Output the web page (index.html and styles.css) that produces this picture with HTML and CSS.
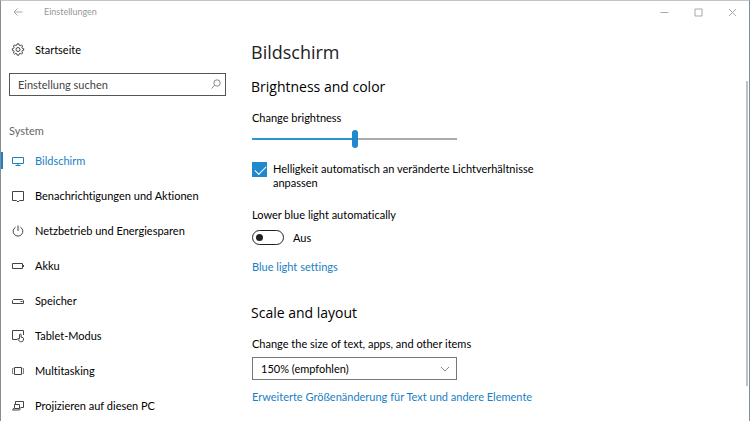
FILE: index.html
```html
<!DOCTYPE html>
<html lang="de">
<head>
    <meta charset="UTF-8">
    <meta name="viewport" content="width=device-width, initial-scale=1.0">
    <title>Einstellungen</title>
    <link rel="stylesheet" href="styles.css">
</head>
<body>
    <div class="window">
        <header class="titlebar">
            <button class="title-btn back" aria-label="Zurück">
                <svg width="10" height="10" viewBox="0 0 10 10"><path d="M9.5 5H1M4.5 1.5L1 5l3.500 3.500"/></svg>
            </button>
            <span class="title-text">Einstellungen</span>
            <div class="title-controls">
                <button class="title-btn" aria-label="Minimieren">
                    <svg width="9" height="9" viewBox="0 0 9 9"><path d="M0.500 4.500h8"/></svg>
                </button>
                <button class="title-btn" aria-label="Maximieren">
                    <svg width="9" height="9" viewBox="0 0 9 9"><path d="M1 1h7v7H1z"/></svg>
                </button>
                <button class="title-btn" aria-label="Schließen">
                    <svg width="9" height="9" viewBox="0 0 9 9"><path d="M1 1l7 7M8 1L1 8"/></svg>
                </button>
            </div>
        </header>

        <div class="layout">
            <aside class="sidebar">
                <a class="nav-item" href="#">
                    <svg class="icon" viewBox="0 0 14 14">
                        <path d="M5.800 2.200L6.200.8h1.600l.4 1.400 1 .4 1.300-.7 1.100 1.100-.7 1.300.4 1 1.400.4v1.600l-1.400.4-.4 1 .7 1.300-1.100 1.100-1.300-.7-1 .4-.4 1.400H6.200l-.4-1.400-1-.4-1.300.7-1.100-1.100.7-1.300-.4-1L1.300 7.300V5.700l1.400-.4.4-1L2.400 3l1.100-1.100 1.300.7z"/>
                        <circle cx="7" cy="6.500" r="2"/>
                    </svg>
                    Startseite
                </a>
                <div class="search">
                    <input type="text" class="search-input" placeholder="Einstellung suchen" aria-label="Einstellung suchen">
                    <svg class="search-icon" viewBox="0 0 10 10"><circle cx="6" cy="4" r="3.200"/><path d="M3.700 6.300L.5 9.500"/></svg>
                </div>
                <h2 class="nav-heading">System</h2>
                <nav class="nav">
                    <a class="nav-item active" href="#">
                        <svg class="icon" viewBox="0 0 14 14"><path d="M1.500 3.500h11v6h-11zM4.500 11.500h5M7 9.500v2"/></svg>
                        Bildschirm
                    </a>
                    <a class="nav-item" href="#">
                        <svg class="icon" viewBox="0 0 14 14"><path d="M1.500 2.500h11v9H8.500L7 13l-1.500-1.500h-4z"/></svg>
                        Benachrichtigungen und Aktionen
                    </a>
                    <a class="nav-item" href="#">
                        <svg class="icon" viewBox="0 0 14 14"><path d="M7 1.500V7M4.500 3.200a4.800 4.800 0 1 0 5 0"/></svg>
                        Netzbetrieb und Energiesparen
                    </a>
                    <a class="nav-item" href="#">
                        <svg class="icon" viewBox="0 0 14 14"><path d="M1.500 4.500h10v5h-10zM12.500 6v2"/></svg>
                        Akku
                    </a>
                    <a class="nav-item" href="#">
                        <svg class="icon" viewBox="0 0 14 14"><path d="M2.500 5.500h9l1 1v3h-11v-3zM9.500 7.500h2"/></svg>
                        Speicher
                    </a>
                    <a class="nav-item" href="#">
                        <svg class="icon" viewBox="0 0 14 14"><path d="M6 10.500H1.500v-9h11v4.500M8.500 9.800V5.800a.8.8 0 0 1 1.600 0v2.400l1.800.4q.8.300.7 1.200l-.3 1.500q-.3 1.400-1.600 1.400H9.500q-.8 0-1.300-.7L6.500 9.700q.7-.8 2 .4"/></svg>
                        Tablet-Modus
                    </a>
                    <a class="nav-item" href="#">
                        <svg class="icon" viewBox="0 0 14 14"><path d="M3.500 3.500h7v7h-7z"/><path stroke-opacity=".7" d="M2.500 4.500h-1v5h1M11.500 4.500h1v5h-1"/></svg>
                        Multitasking
                    </a>
                    <a class="nav-item" href="#">
                        <svg class="icon" viewBox="0 0 14 14"><path d="M4.500 5.500v-3h8v6h-3M3.500 5.500h5v4h-5zM3.500 8.500L1.500 11h7l1-1.500"/></svg>
                        Projizieren auf diesen PC
                    </a>
                </nav>
            </aside>

            <main class="content">
                <h1 class="page-title">Bildschirm</h1>

                <section class="section">
                    <h2 class="section-title">Brightness and color</h2>
                    <label class="label" for="brightness">Change brightness</label>
                    <input type="range" class="slider" id="brightness" min="0" max="100" value="50">

                    <div class="check-row">
                        <input type="checkbox" class="checkbox" id="auto" checked>
                        <label for="auto">Helligkeit automatisch an veränderte Lichtverhältnisse anpassen</label>
                    </div>

                    <label class="label" for="bluelight">Lower blue light automatically</label>
                    <div class="toggle-row">
                        <input type="checkbox" class="toggle" id="bluelight" role="switch">
                        <span>Aus</span>
                    </div>
                    <a class="link" href="#">Blue light settings</a>
                </section>

                <section class="section">
                    <h2 class="section-title">Scale and layout</h2>
                    <label class="label" for="scale">Change the size of text, apps, and other items</label>
                    <div class="select-wrap">
                        <select class="select" id="scale">
                            <option>100%</option>
                            <option>125%</option>
                            <option selected>150% (empfohlen)</option>
                            <option>175%</option>
                        </select>
                        <svg class="chevron" viewBox="0 0 10 6"><path d="M1 1l4 4 4-4"/></svg>
                    </div>
                    <a class="link" href="#">Erweiterte Größenänderung für Text und andere Elemente</a>
                </section>
            </main>
        </div>
        <div class="scroll-thumb"></div>
    </div>
</body>
</html>
```

FILE: styles.css
```css
* {
    box-sizing: border-box;
}

body {
    margin: 0;
    height: 100vh;
    overflow: hidden;
    background-color: #fff;
    color: #000;
    font-family: Lato, "Open Sans", sans-serif;
    font-size: 11px;
    line-height: 14px;
    font-variant-ligatures: none;
}

h1, h2 {
    margin: 0;
    font-weight: normal;
}

svg {
    fill: none;
    stroke: currentColor;
}

.window {
    position: relative;
    height: 100%;
    overflow: hidden;
    border: 1px solid #8a8d92;
    border-top-color: #c4c4c4;
    border-right-color: #7c90a0;
    border-bottom: none;
}

.titlebar {
    display: flex;
    align-items: center;
    height: 22px;
    color: #999;
    font-size: 9px;
}

.title-btn {
    display: flex;
    align-items: center;
    justify-content: center;
    width: 34px;
    height: 22px;
    padding: 0;
    border: none;
    background: none;
    color: #aaa;
}

.title-text {
    margin-left: 9px;
}

.title-controls {
    display: flex;
    margin-left: auto;
}

.layout {
    display: grid;
    grid-template-columns: 225px 1fr;
    gap: 25px;
}

.nav-item {
    display: flex;
    align-items: center;
    gap: 10px;
    height: 35px;
    padding-left: 10px;
    color: #000;
    text-decoration: none;
}

.sidebar {
    padding-top: 9px;
}

.icon {
    width: 14px;
    height: 14px;
    flex: none;
    color: #444;
}

.nav-item.active,
.active .icon {
    color: #1a80c4;
}

.nav-item.active {
    background: linear-gradient(#1a80c4, #1a80c4) left center / 2px 17px no-repeat;
}

.search {
    position: relative;
    margin: 6px 0 0 8px;
}

.search-input {
    display: block;
    width: 100%;
    height: 23px;
    padding: 0 24px 0 8px;
    border: 1px solid #555;
    background: #fff;
    font: inherit;
}

.search-input::placeholder {
    color: #444;
    opacity: 1;
}

.search-icon {
    position: absolute;
    top: 6px;
    right: 5px;
    width: 10px;
    height: 10px;
    color: #888;
}

.nav-heading {
    padding: 28px 0 5px 8px;
    color: #666;
    font-size: 11px;
    line-height: 14px;
}

.content {
    padding-top: 17px;
}

.page-title {
    color: #222;
    font-family: "Open Sans", sans-serif;
    font-size: 18px;
    font-weight: normal;
    line-height: 24px;
}

.section {
    margin-bottom: 16px;
}

.section-title {
    padding: 13px 0 14px;
    font-family: "Open Sans", sans-serif;
    font-size: 14px;
    line-height: 20px;
}

.label {
    display: block;
    padding-left: 1px;
}

.slider {
    display: block;
    width: 205px;
    height: 18px;
    margin: 5px 0 0 1px;
    appearance: none;
    background: linear-gradient(90deg, #2a93d5 50%, #aaa 50%) center / 100% 2px no-repeat;
}

.slider::-webkit-slider-thumb {
    appearance: none;
    width: 6px;
    height: 18px;
    border-radius: 3px;
    background: #2088cc;
}

.check-row {
    display: flex;
    gap: 6px;
    max-width: 300px;
    margin: 14px 0 18px 1px;
}

.checkbox {
    flex: none;
    width: 15px;
    height: 15px;
    margin: 0;
    appearance: none;
    background: #2088cc;
}

.checkbox:checked::before {
    content: "";
    display: block;
    width: 10px;
    height: 5px;
    margin: 4px 0 0 3px;
    border: solid #fff;
    border-width: 0 0 1px 1px;
    transform: rotate(-45deg);
}

.toggle-row {
    display: flex;
    align-items: center;
    gap: 9px;
    margin: 8px 0 15px 1px;
}

.toggle {
    width: 32px;
    height: 15px;
    margin: 0;
    padding: 3px;
    appearance: none;
    border: 1px solid #222;
    border-radius: 8px;
}

.toggle::before {
    content: "";
    display: block;
    width: 7px;
    height: 7px;
    border-radius: 50%;
    background: #222;
}

.link {
    display: block;
    padding-left: 1px;
    color: #1a80c4;
    text-decoration: none;
}

.select-wrap {
    position: relative;
    width: 205px;
    margin: 6px 0 10px 1px;
}

.select {
    display: block;
    width: 100%;
    height: 23px;
    padding: 0 8px;
    appearance: none;
    border: 1px solid #777;
    border-radius: 0;
    background: #fff;
    color: #000;
    font: inherit;
}

.chevron {
    position: absolute;
    top: 9px;
    right: 7px;
    width: 10px;
    height: 6px;
    color: #888;
    pointer-events: none;
}

.scroll-thumb {
    position: absolute;
    top: 80px;
    right: 1px;
    width: 2px;
    height: 305px;
    background: #c0c0c6;
}
```
